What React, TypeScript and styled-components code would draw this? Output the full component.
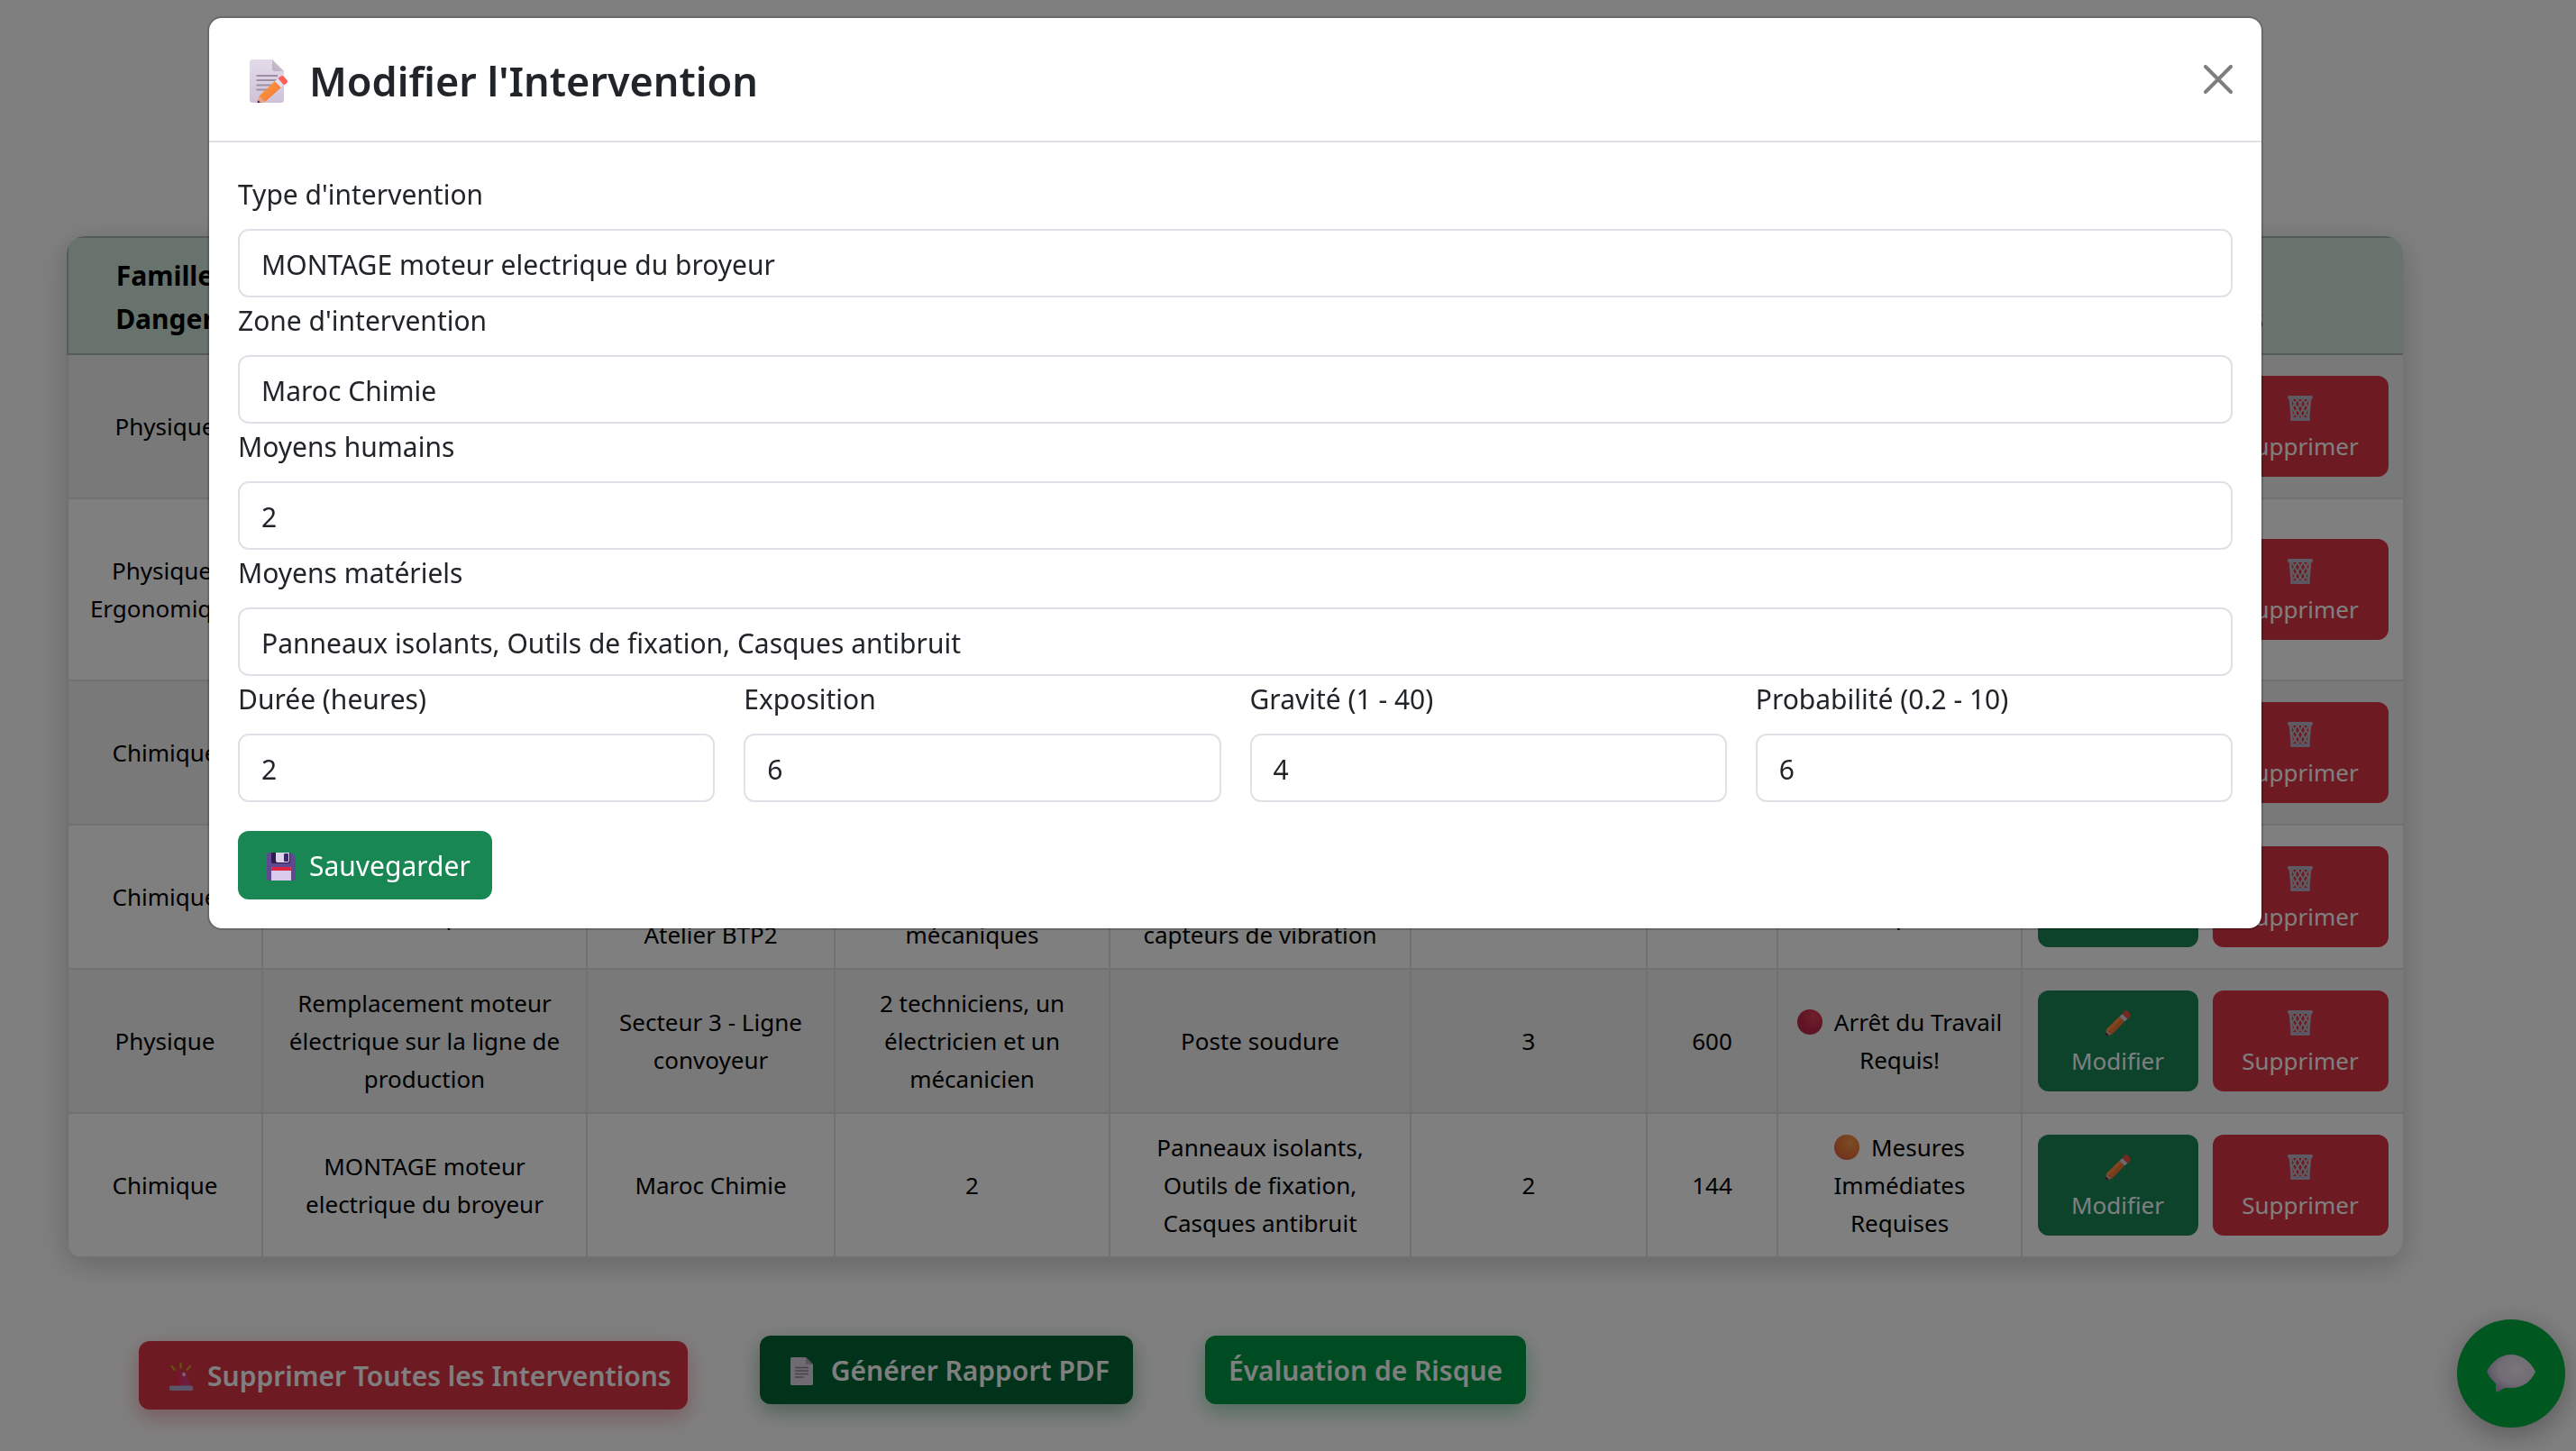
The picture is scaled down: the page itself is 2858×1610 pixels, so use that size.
import React from "react";
import styled, { createGlobalStyle, css } from "styled-components";

const font = `"Noto Sans", "Open Sans", sans-serif`;

const GlobalStyle = createGlobalStyle`
  * { box-sizing: border-box; }
  html, body { margin: 0; height: 100%; }
  body { background: #fff; color: #212529; font-family: ${font}; font-size: 30px; line-height: 48px; }
  button, input { font: inherit; margin: 0; }
`;

/* ---------- page ---------- */

const Page = styled.main`
  padding: 262px 192px 0 74px;
`;

const TableCard = styled.div`
  border-radius: 20px;
  overflow: hidden;
  box-shadow: 0 8px 32px rgba(0, 0, 0, 0.2);
`;

const Table = styled.table`
  width: 100%;
  table-layout: fixed;
  border-collapse: collapse;
  color: #000;
  text-align: center;
`;

const HeadCell = styled.th`
  padding: 18px 16px 14px;
  border: 2px solid #a7b9b1;
  background: #d1e7dd;
  font-weight: 700;
  vertical-align: bottom;
  white-space: pre-line;
`;

const Row = styled.tr`
  &:nth-child(odd) {
    background: #f2f2f2;
  }
`;

const Cell = styled.td`
  padding: 16px 12px;
  border: 2px solid #dee2e6;
  font-size: 26px;
  line-height: 42px;
  vertical-align: middle;
  white-space: pre-line;
`;

const RowActions = styled.div`
  display: flex;
  justify-content: center;
  gap: 16px;
`;

const tones = {
  red: css`
    background: #dc3545;
    box-shadow: 0 8px 24px rgba(220, 53, 69, 0.4);
  `,
  forest: css`
    background: #006633;
    box-shadow: 0 8px 24px rgba(0, 102, 51, 0.4);
  `,
  green: css`
    background: #009944;
    box-shadow: 0 8px 24px rgba(0, 153, 68, 0.4);
  `,
};

const SmallButton = styled.button<{ $danger?: boolean }>`
  display: flex;
  flex-direction: column;
  align-items: center;
  height: 112px;
  width: ${(p) => (p.$danger ? 195 : 178)}px;
  padding: 15px 0 13px;
  border: 0;
  border-radius: 12px;
  background: ${(p) => (p.$danger ? "#dc3545" : "#198754")};
  color: #fff;
  font-size: 26px;
  line-height: 42px;
`;

const IconLine = styled.span`
  display: flex;
  align-items: center;
  height: 42px;
`;

const PageActions = styled.div`
  display: flex;
  align-items: flex-start;
  gap: 80px;
  margin-top: 86px;
  padding-left: 80px;
`;

const ActionButton = styled.button<{ $tone: keyof typeof tones; $lowered?: boolean; $icon?: boolean }>`
  display: flex;
  align-items: center;
  gap: ${(p) => (p.$lowered ? 16 : 20)}px;
  height: 76px;
  margin-top: ${(p) => (p.$lowered ? 6 : 0)}px;
  padding: 2px ${(p) => (p.$lowered ? 18 : 26)}px 0 ${(p) => (p.$icon ? 34 : 26)}px;
  border: 0;
  border-radius: 12px;
  color: #fff;
  font-weight: 600;
  white-space: nowrap;
  ${(p) => tones[p.$tone]}
`;

const ChatButton = styled.button`
  position: fixed;
  right: 12px;
  bottom: 26px;
  display: flex;
  align-items: center;
  justify-content: center;
  width: 120px;
  height: 120px;
  border: 0;
  border-radius: 50%;
  background: #00b140;
  box-shadow: 0 8px 32px rgba(0, 0, 0, 0.3);
`;

/* ---------- modal ---------- */

const Backdrop = styled.div`
  position: fixed;
  inset: 0;
  padding: 18px 117px 0 0;
  background: rgba(0, 0, 0, 0.5);
`;

const Dialog = styled.section`
  max-width: 2281px;
  margin: 0 auto;
  border: 2px solid rgba(0, 0, 0, 0.175);
  border-radius: 16px;
  background: #fff;
  background-clip: padding-box;
`;

const DialogHeader = styled.header`
  display: flex;
  align-items: center;
  justify-content: space-between;
  padding: 32px;
  border-bottom: 2px solid #dee2e6;
`;

const DialogTitle = styled.h1`
  display: flex;
  align-items: center;
  gap: 24px;
  margin: 0;
  padding: 4px 0 0 13px;
  font-size: 45px;
  font-weight: 600;
  line-height: 68px;
`;

const CloseButton = styled.button`
  display: flex;
  padding: 0;
  border: 0;
  background: none;
  opacity: 0.5;
`;

const DialogForm = styled.form`
  padding: 32px;
`;

const Field = styled.div`
  display: flex;
  flex-direction: column;
  gap: 12px;
  flex: 1;
  min-width: 0;
`;

const Label = styled.label`
  line-height: 52px;
`;

const FieldRow = styled.div`
  display: flex;
  gap: 32px;
`;

const Input = styled.input`
  width: 100%;
  height: 76px;
  padding: 13px 24px 11px;
  border: 2px solid #dee2e6;
  border-radius: 12px;
  background: #fff;
  color: #212529;
`;

const SaveButton = styled.button`
  display: flex;
  align-items: center;
  gap: 15px;
  height: 76px;
  margin-top: 32px;
  padding: 2px 24px 0 32px;
  border: 0;
  border-radius: 12px;
  background: #198754;
  color: #fff;
`;

/* ---------- drawings ---------- */

const MemoIcon = () => (
  <svg width="42" height="48" viewBox="0 0 42 48" aria-hidden="true">
    <defs>
      <linearGradient id="memoPaper" x1="0" y1="0" x2="0" y2="1">
        <stop offset="0" stopColor="#e3dbea" />
        <stop offset="1" stopColor="#cfc2d8" />
      </linearGradient>
      <linearGradient id="memoFold" x1="0" y1="1" x2="1" y2="0">
        <stop offset="0" stopColor="#b9adbd" />
        <stop offset="1" stopColor="#d9cfdf" />
      </linearGradient>
      <linearGradient id="memoPencil" x1="0" y1="0" x2="1" y2="1">
        <stop offset="0" stopColor="#ffa03c" />
        <stop offset="1" stopColor="#f2703a" />
      </linearGradient>
    </defs>
    <path d="M3 0H25L38 13V45a3 3 0 0 1-3 3H3a3 3 0 0 1-3-3V3a3 3 0 0 1 3-3Z" fill="url(#memoPaper)" />
    <path d="M25 0L38 13H28a3 3 0 0 1-3-3Z" fill="url(#memoFold)" />
    <path d="M7.500 18H31M7.500 23H31M7.500 28.500H26M7.500 33.500H20" stroke="#9b8fa3" strokeWidth="2" />
    <path d="M8 48L10.500 40.500L17 47L14 48Z" fill="#e8a58c" />
    <path d="M8.500 48L9.400 45.200L12 48Z" fill="#3c1f3f" />
    <path d="M10.500 40.500L28 24L35 31L17 47Z" fill="url(#memoPencil)" />
    <path d="M28 24L31.500 21L38 28L34.500 31Z" fill="#e6dff0" />
    <path d="M31.500 21L34 19a3 3 0 0 1 4 0l3.500 4a3 3 0 0 1 0 3L38 28.500Z" fill="#ff5f57" />
  </svg>
);

const FloppyIcon = () => (
  <svg width="32" height="31" viewBox="0 0 32 31" aria-hidden="true">
    <path d="M2 0H27L32 5V29a2 2 0 0 1-2 2H2a2 2 0 0 1-2-2V2a2 2 0 0 1 2-2Z" fill="#5f4a92" />
    <path d="M5 0H26V10a2 2 0 0 1-2 2H7a2 2 0 0 1-2-2Z" fill="#2f1c4a" />
    <path d="M10 0H25V9a2 2 0 0 1-2 2H12a2 2 0 0 1-2-2Z" fill="#dcd2ea" />
    <rect x="19" y="1" width="5" height="9" rx="1" fill="#3d2570" />
    <path d="M5 18a2 2 0 0 1 2-2H25a2 2 0 0 1 2 2V31H5Z" fill="#d9c9ea" />
    <path d="M5 20V18a2 2 0 0 1 2-2H25a2 2 0 0 1 2 2V20Z" fill="#e0233f" />
  </svg>
);

const PencilIcon = () => (
  <svg width="28" height="28" viewBox="0 0 28 28" aria-hidden="true">
    <path d="M0 28L1 21L7 27L2 28Z" fill="#e3a188" />
    <path d="M0 26L.6 24.500L3.500 27.600L1 28A1 1 0 0 1 0 27Z" fill="#3a2440" />
    <path d="M1 21L15.500 7L21 12.500L7 27Z" fill="#f0743c" />
    <path d="M1 21L15.500 7L18 9.500L3.800 23.800Z" fill="#ff8c3c" />
    <path d="M15.500 7L18.500 4L24.500 9.500L21 12.500Z" fill="#d8cfe0" />
    <path d="M18.500 4L21.200 .8a2.500 2.500 0 0 1 3.300 0L27.400 4a2.500 2.500 0 0 1 0 3L24.500 9.500Z" fill="#f0523f" />
  </svg>
);

const TrashIcon = () => (
  <svg width="28" height="28" viewBox="0 0 28 28" aria-hidden="true">
    <path
      d="M5 4L17 25M11 4L22 23M17 4L24 15M4 11L11.500 25M23 4L11 25M17 4L6 23M11 4L4 15M24 11L16.500 25"
      stroke="#c0bac6"
      strokeWidth="1.900"
    />
    <path d="M3 3L5 26H23L25 3" fill="none" stroke="#bdb4c6" strokeWidth="2.800" />
    <rect x="0" y="0" width="28" height="4" rx="2" fill="#bfb6ca" />
    <rect x="3" y="24" width="22" height="4" rx="1.800" fill="#b7adc2" />
  </svg>
);

const Ball = styled.span<{ $color: "red" | "orange" }>`
  display: inline-block;
  width: 28px;
  height: 28px;
  margin-right: 13px;
  border-radius: 50%;
  vertical-align: -4px;
  background: ${(p) =>
    p.$color === "red"
      ? "radial-gradient(circle at 65% 30%, #e0405a, #c42a48 50%, #a82a50)"
      : "radial-gradient(circle at 65% 30%, #f49a4a, #ec7438 55%, #d0505a)"};
`;

const SirenIcon = () => (
  <svg width="26" height="31" viewBox="0 0 26 31" aria-hidden="true">
    <defs>
      <linearGradient id="siren" x1="0" x2="1">
        <stop offset="0" stopColor="#f5203a" />
        <stop offset="1" stopColor="#d0459a" />
      </linearGradient>
    </defs>
    <path d="M12.500 1V5.500M2.500 4L6 8M23 4L19.500 8" stroke="#c8a81c" strokeWidth="2.200" strokeLinecap="round" />
    <path d="M7.500 12a3 3 0 0 1 3-2.500h5a3 3 0 0 1 3 2.500L22 26H4Z" fill="url(#siren)" />
    <ellipse cx="16" cy="13" rx="1.800" ry="2.200" fill="#f8c6dc" />
    <rect y="25.500" width="26" height="5.500" rx="1.500" fill="#b4abd0" />
  </svg>
);

const DocIcon = () => (
  <svg width="25" height="31" viewBox="0 0 25 31" aria-hidden="true">
    <path
      d="M1.500 0H17L25 8V29.500a1.500 1.500 0 0 1-1.500 1.500H1.500A1.500 1.500 0 0 1 0 29.500V1.500A1.500 1.500 0 0 1 1.500 0Z"
      fill="#e0d6e6"
    />
    <path d="M17 0L25 8H18.500A1.500 1.500 0 0 1 17 6.500Z" fill="#b5aabb" />
    <path d="M5 11.500H20M5 15H20M5 18.500H20M5 22H15" stroke="#8d8494" strokeWidth="1.400" />
  </svg>
);

const BubbleIcon = () => (
  <svg width="54" height="42" viewBox="0 0 54 42" aria-hidden="true">
    <defs>
      <radialGradient id="bubble" cx=".62" cy=".4" r=".65">
        <stop offset="0" stopColor="#f0ecf1" />
        <stop offset=".6" stopColor="#e2d9e8" />
        <stop offset="1" stopColor="#b39fc8" />
      </radialGradient>
    </defs>
    <path d="M0 19C5 8 15 0 27 0S49 8 54 19C49 30 40 37 27 37H20L12 41.500Q10 42 10 40V32Q4 27 0 19Z" fill="url(#bubble)" />
  </svg>
);

const CloseIcon = () => (
  <svg width="32" height="32" viewBox="0 0 16 16" aria-hidden="true">
    <path d="M1 1L15 15M15 1L1 15" stroke="#000" strokeWidth="2" strokeLinecap="round" />
  </svg>
);

/* ---------- data ---------- */

const columns = [
  { title: "Famille\nDanger", width: 216 },
  { title: "Intervention", width: 360 },
  { title: "Zone", width: 275 },
  { title: "Moyens\nhumains", width: 305 },
  { title: "Moyens\nmatériels", width: 334 },
  { title: "Durée\n(heures)", width: 262 },
  { title: "Score", width: 145 },
  { title: "Décision", width: 271 },
  { title: "Actions", width: 424 },
];

const stop = { color: "red" as const, text: "Arrêt du Travail\nRequis!" };
const measures = { color: "orange" as const, text: "Mesures\nImmédiates\nRequises" };

const rows = [
  { cells: ["Physique", "", "", "\n\n\u00a0", "", "", ""], decision: stop },
  { cells: ["Physique,\nErgonomique", "", "", "\n\n\n\u00a0", "", "", ""], decision: stop },
  { cells: ["Chimique", "", "", "\n\n\u00a0", "", "", ""], decision: stop },
  {
    cells: [
      "Chimique",
      "Montage moteur\nélectrique",
      "Secteur 2 -\nLigne\nAtelier BTP2",
      "2 techniciens,\nun agent\nmécaniques",
      "Poste soudure,\nOutils,\ncapteurs de vibration",
      "",
      "",
    ],
    decision: stop,
  },
  {
    cells: [
      "Physique",
      "Remplacement moteur\nélectrique sur la ligne de\nproduction",
      "Secteur 3 - Ligne\nconvoyeur",
      "2 techniciens, un\nélectricien et un\nmécanicien",
      "Poste soudure",
      "3",
      "600",
    ],
    decision: stop,
  },
  {
    cells: [
      "Chimique",
      "MONTAGE moteur\nelectrique du broyeur",
      "Maroc Chimie",
      "2",
      "Panneaux isolants,\nOutils de fixation,\nCasques antibruit",
      "2",
      "144",
    ],
    decision: measures,
  },
];

const wideFields = [
  { id: "type", label: "Type d'intervention", value: "MONTAGE moteur electrique du broyeur" },
  { id: "zone", label: "Zone d'intervention", value: "Maroc Chimie" },
  { id: "humains", label: "Moyens humains", value: "2" },
  { id: "materiels", label: "Moyens matériels", value: "Panneaux isolants, Outils de fixation, Casques antibruit" },
];

const scoreFields = [
  { id: "duree", label: "Durée (heures)", value: "2" },
  { id: "exposition", label: "Exposition", value: "6" },
  { id: "gravite", label: "Gravité (1 - 40)", value: "4" },
  { id: "probabilite", label: "Probabilité (0.2 - 10)", value: "6" },
];

type FieldData = { id: string; label: string; value: string };

const TextField = ({ id, label, value }: FieldData) => (
  <Field>
    <Label htmlFor={id}>{label}</Label>
    <Input id={id} type="text" defaultValue={value} />
  </Field>
);

const InterventionTable = () => (
  <TableCard>
    <Table>
      <colgroup>
        {columns.map((c) => (
          <col key={c.title} width={c.width} />
        ))}
      </colgroup>
      <thead>
        <tr>
          {columns.map((c) => (
            <HeadCell key={c.title} scope="col">
              {c.title}
            </HeadCell>
          ))}
        </tr>
      </thead>
      <tbody>
        {rows.map((row, i) => (
          <Row key={i}>
            {row.cells.map((text, j) => (
              <Cell key={j}>{text}</Cell>
            ))}
            <Cell>
              <Ball $color={row.decision.color} />
              {row.decision.text}
            </Cell>
            <Cell>
              <RowActions>
                <SmallButton type="button">
                  <IconLine>
                    <PencilIcon />
                  </IconLine>
                  Modifier
                </SmallButton>
                <SmallButton type="button" $danger>
                  <IconLine>
                    <TrashIcon />
                  </IconLine>
                  Supprimer
                </SmallButton>
              </RowActions>
            </Cell>
          </Row>
        ))}
      </tbody>
    </Table>
  </TableCard>
);

const EditDialog = () => (
  <Backdrop>
    <Dialog role="dialog" aria-modal="true" aria-labelledby="dialog-title">
      <DialogHeader>
        <DialogTitle id="dialog-title">
          <MemoIcon />
          Modifier l'Intervention
        </DialogTitle>
        <CloseButton type="button" aria-label="Fermer">
          <CloseIcon />
        </CloseButton>
      </DialogHeader>
      <DialogForm>
        {wideFields.map((f) => (
          <TextField key={f.id} {...f} />
        ))}
        <FieldRow>
          {scoreFields.map((f) => (
            <TextField key={f.id} {...f} />
          ))}
        </FieldRow>
        <SaveButton type="button">
          <FloppyIcon />
          Sauvegarder
        </SaveButton>
      </DialogForm>
    </Dialog>
  </Backdrop>
);

export default function App() {
  return (
    <>
      <GlobalStyle />
      <Page>
        <InterventionTable />
        <PageActions>
          <ActionButton type="button" $tone="red" $lowered $icon>
            <SirenIcon />
            Supprimer Toutes les Interventions
          </ActionButton>
          <ActionButton type="button" $tone="forest" $icon>
            <DocIcon />
            Générer Rapport PDF
          </ActionButton>
          <ActionButton type="button" $tone="green">
            Évaluation de Risque
          </ActionButton>
        </PageActions>
      </Page>
      <ChatButton type="button" aria-label="Discussion">
        <BubbleIcon />
      </ChatButton>
      <EditDialog />
    </>
  );
}
